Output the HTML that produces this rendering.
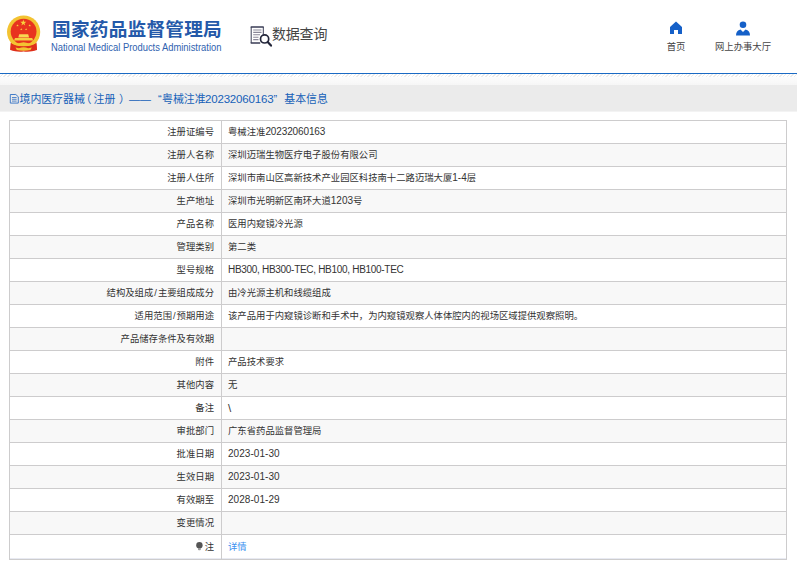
<!DOCTYPE html>
<html lang="zh-CN">
<head>
<meta charset="utf-8">
<title>数据查询</title>
<style>
*{margin:0;padding:0;box-sizing:border-box}
html,body{width:797px;height:566px;overflow:hidden;background:#fff}
body{font-family:"Liberation Sans","Noto Sans CJK SC",sans-serif;font-size:12px;color:#333;position:relative}
.abs{position:absolute}
.logo-cn{left:52.300px;top:17.800px;font-size:17.8px;font-weight:bold;color:#2459a9;letter-spacing:0.2px;line-height:24px;white-space:nowrap;transform:scaleX(1.05);transform-origin:0 0}
.logo-en{left:51px;top:40.5px;font-size:9.4px;color:#2f62b0;line-height:12px;white-space:nowrap;transform:scaleY(1.13);transform-origin:0 0}
.sjcx{left:272px;top:23px;font-size:14px;color:#444;line-height:22px;white-space:nowrap;letter-spacing:-0.2px}
.nav{font-size:9.35px;color:#444;line-height:12px;white-space:nowrap;text-align:center}
.blueline{left:0;top:73px;width:797px;height:1px;background:#1a6ac4}
.hatch{left:0;top:74px;width:797px;height:3px;background:repeating-linear-gradient(135deg,#fff 0,#fff 1.6px,#ebebeb 1.6px,#ebebeb 2.6px)}
.bar{left:0;top:85px;width:797px;height:26px;background:#ebebeb;border-bottom:1px solid #f3f3f3;box-sizing:content-box}
.pre{left:0;top:77px;width:797px;height:8px;background:linear-gradient(#fdfdfd,#f6f6f6)}
.bartxt{left:19px;top:92.200px;font-size:10.9px;color:#1560b8;line-height:15px;white-space:nowrap}
.bartxt span{position:absolute;top:0;white-space:nowrap}
table{position:absolute;left:9px;top:120px;width:778px;border-collapse:collapse;table-layout:fixed}
td{border:1px solid #cdcccd;height:23px;font-size:9.35px;line-height:14px;padding:0 6px;white-space:nowrap;overflow:hidden;color:#333;vertical-align:middle}
td.l{width:212px;text-align:right;padding-right:7px}
tr:nth-child(even) td{background:#f8f8f8}
tr:last-child td{height:25px;box-shadow:inset 0 -1px 0 #e8eaf2;padding-bottom:1px}
a{color:#3b8ff0;text-decoration:none}
.n{font-size:10px}
.sl{padding:0 1px}
</style>
</head>
<body>
<svg class="abs" style="left:0;top:0" width="60" height="60" viewBox="0 0 60 60">
<path d="M10.700 42.500L36.500 42.500L37 50Q30 52.200 23.600 51.300Q17 52.200 10.200 50Z" fill="#e0301c"/>
<circle cx="23.600" cy="32" r="16.600" fill="#f3c332"/>
<circle cx="23.600" cy="31.600" r="12.900" fill="#e8331f"/>
<path d="M11 43.500Q23.600 49 36.200 43.500L36.800 49.800Q30 52 23.600 51.200Q17 52 10.400 49.800Z" fill="#df2f1b"/>
<path d="M13 44.500Q18 43.500 21 42.800Q23.600 41.500 26.200 42.800Q29 43.500 34.200 44.500Q29 46.200 23.600 45.600Q18 46.200 13 44.500Z" fill="#f3c332"/>
<path d="M15.500 47.500L19 48.300Q23.600 46.300 28.200 48.300L31.800 47.500L30.500 50Q23.600 51.500 16.800 50Z" fill="#f3c332"/>
<polygon points="23.30,19.60 24.05,21.76 26.34,21.81 24.52,23.20 25.18,25.39 23.30,24.08 21.42,25.39 22.08,23.20 20.26,21.81 22.55,21.76" fill="#f8d23c"/><polygon points="17.50,24.20 17.81,25.08 18.74,25.10 17.99,25.66 18.26,26.55 17.50,26.02 16.74,26.55 17.01,25.66 16.26,25.10 17.19,25.08" fill="#f8d23c"/><polygon points="29.70,24.20 30.01,25.08 30.94,25.10 30.19,25.66 30.46,26.55 29.70,26.02 28.94,26.55 29.21,25.66 28.46,25.10 29.39,25.08" fill="#f8d23c"/><polygon points="21.30,28.00 21.61,28.88 22.54,28.90 21.79,29.46 22.06,30.35 21.30,29.82 20.54,30.35 20.81,29.46 20.06,28.90 20.99,28.88" fill="#f8d23c"/><polygon points="26.10,28.00 26.41,28.88 27.34,28.90 26.59,29.46 26.86,30.35 26.10,29.82 25.34,30.35 25.61,29.46 24.86,28.90 25.79,28.88" fill="#f8d23c"/>
<path d="M18.300 37.600L19.200 34.300L28.200 34.300L29.100 37.600Z" fill="#f8d652"/>
<path d="M14 40.600L15 38L32.200 38L33.200 40.600Z" fill="#f6cc40"/>
</svg>
<div class="abs logo-cn">国家药品监督管理局</div>
<div class="abs logo-en">National Medical Products Administration</div>
<svg class="abs" style="left:250px;top:25px" width="24" height="24" viewBox="0 0 24 24" fill="none">
<path d="M0.700 2h13M0.700 18h9.500" stroke="#3a3d55" stroke-width="1.700"/>
<path d="M1.200 2v16M13.300 2v7.500" stroke="#3a3d55" stroke-width="1"/>
<path d="M3.200 5h8.300M3.200 7.400h8.300M3.200 9.800h6.800M3.200 12.200h5.300M3.200 14.600h5.300" stroke="#8a8798" stroke-width="1.100"/>
<circle cx="14.600" cy="13.900" r="4.100" stroke="#23263a" stroke-width="1.700" fill="#fff"/>
<path d="M17.700 17l3.300 3.600" stroke="#23263a" stroke-width="2.200" stroke-linecap="round"/>
</svg>
<div class="abs sjcx">数据查询</div>
<svg class="abs" style="left:669px;top:21px" width="14" height="14" viewBox="0 0 14 14"><path d="M7 0.500L13 6v7H9V9H5v4H1V6z" fill="#1560c8"/></svg>
<div class="abs nav" style="left:656px;top:41px;width:40px">首页</div>
<svg class="abs" style="left:735px;top:20.700px" width="16" height="15" viewBox="0 0 16 15"><circle cx="8" cy="3.800" r="3.300" fill="#1560c8"/><path d="M1 14.500q0-5 4.500-6L8 11l2.500-2.500q4.500 1 4.500 6z" fill="#1560c8"/></svg>
<div class="abs nav" style="left:703px;top:41px;width:80px">网上办事大厅</div>
<div class="abs blueline"></div>
<div class="abs hatch"></div>
<div class="abs pre"></div>
<div class="abs bar"></div>
<svg class="abs" style="left:9px;top:93px" width="11" height="12" viewBox="0 0 11 12" fill="none" stroke="#2f6fc4" stroke-width="0.900"><path d="M1.300 1.500h5.500l2.500 2.300v6.300h-8z"/><path d="M3 4.500h4.600M3 6.300h4.600M3 8.100h4.600" stroke-width="0.800"/></svg>
<div class="abs bartxt"><span style="left:0.500px">境内医疗器械</span><span style="left:61.500px">（</span><span style="left:74.500px">注册</span><span style="left:100px">）</span><span style="left:110px">——</span><span style="left:139px">“</span><span style="left:143px">粤械注准</span><span style="left:186px;font-size:11.500px;letter-spacing:-0.18px">20232060163</span><span style="left:254.500px">”</span><span style="left:265.300px">基本信息</span></div>
<table>
<tr><td class="l">注册证编号</td><td>粤械注准<span class="n" style="letter-spacing:-0.12px">20232060163</span></td></tr>
<tr><td class="l">注册人名称</td><td>深圳迈瑞生物医疗电子股份有限公司</td></tr>
<tr><td class="l">注册人住所</td><td>深圳市南山区高新技术产业园区科技南十二路迈瑞大厦<span class="n">1-4</span>层</td></tr>
<tr><td class="l">生产地址</td><td>深圳市光明新区南环大道<span class="n">1203</span>号</td></tr>
<tr><td class="l">产品名称</td><td>医用内窥镜冷光源</td></tr>
<tr><td class="l">管理类别</td><td>第二类</td></tr>
<tr><td class="l">型号规格</td><td><span class="n" style="letter-spacing:-0.3px">HB300, HB300-TEC, HB100, HB100-TEC</span></td></tr>
<tr><td class="l">结构及组成<span class="sl">/</span>主要组成成分</td><td>由冷光源主机和线缆组成</td></tr>
<tr><td class="l">适用范围<span class="sl">/</span>预期用途</td><td>该产品用于内窥镜诊断和手术中，为内窥镜观察人体体腔内的视场区域提供观察照明。</td></tr>
<tr><td class="l">产品储存条件及有效期</td><td></td></tr>
<tr><td class="l">附件</td><td>产品技术要求</td></tr>
<tr><td class="l">其他内容</td><td>无</td></tr>
<tr><td class="l">备注</td><td><span class="n" style="font-size:11.500px">\</span></td></tr>
<tr><td class="l">审批部门</td><td>广东省药品监督管理局</td></tr>
<tr><td class="l">批准日期</td><td><span class="n" style="letter-spacing:0.05px">2023-01-30</span></td></tr>
<tr><td class="l">生效日期</td><td><span class="n" style="letter-spacing:0.05px">2023-01-30</span></td></tr>
<tr><td class="l">有效期至</td><td><span class="n" style="letter-spacing:0.05px">2028-01-29</span></td></tr>
<tr><td class="l">变更情况</td><td></td></tr>
<tr><td class="l"><svg width="7" height="9" viewBox="0 0 7 9" style="vertical-align:-1px;margin-right:1.300px"><circle cx="3.400" cy="3.300" r="3.200" fill="#555"/><path d="M2 6h2.800v1.800q-1.400 1-2.800 0z" fill="#999"/></svg>注</td><td><a>详情</a></td></tr>
</table>
</body>
</html>
